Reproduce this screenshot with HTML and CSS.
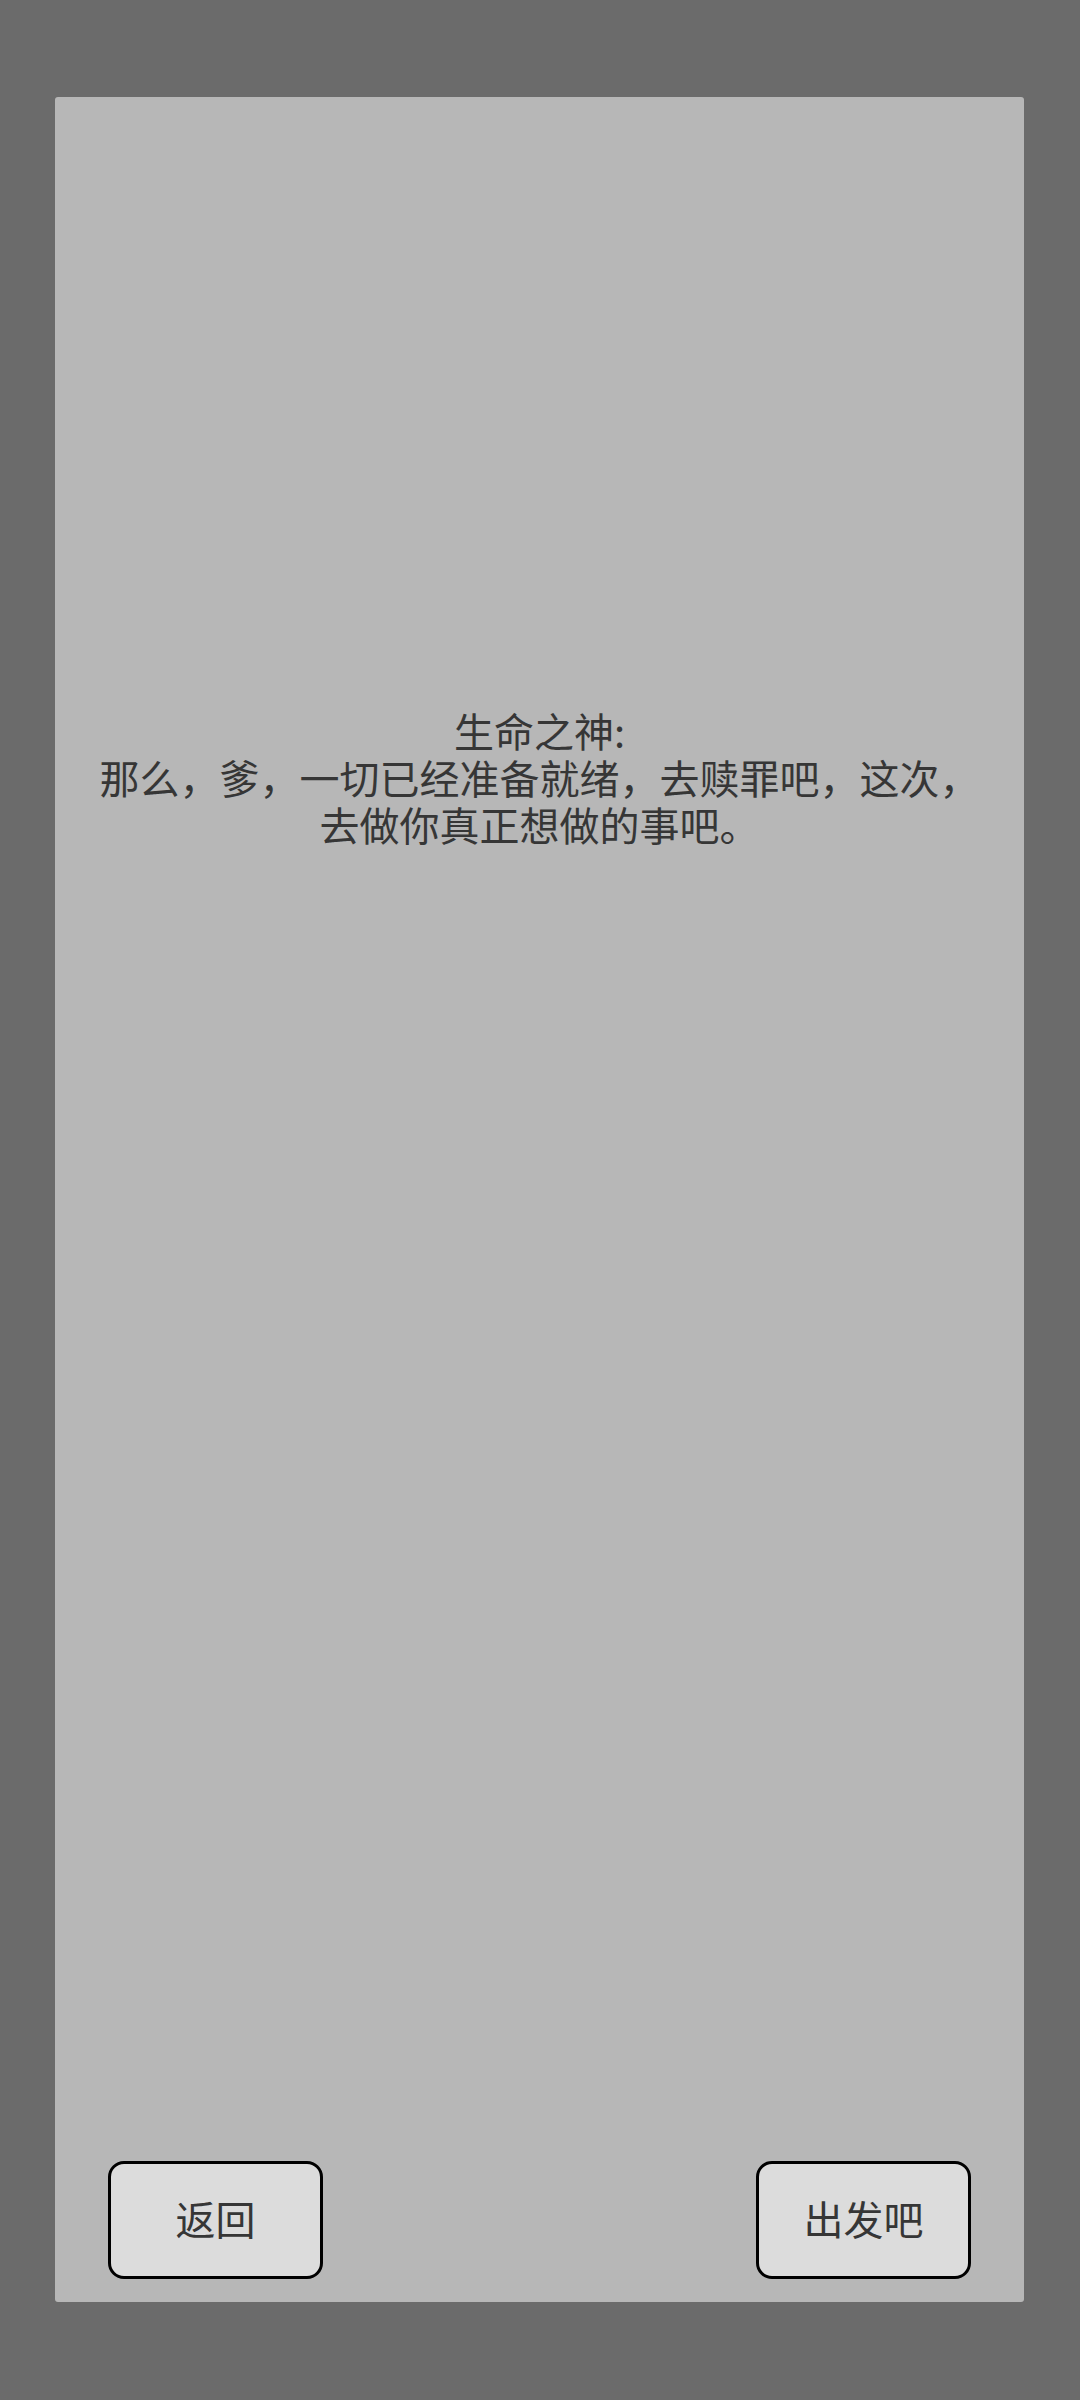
FILE: index.html
```html
<!DOCTYPE html>
<html lang="zh-CN">
<head>
<meta charset="utf-8">
<title>生命之神</title>
<link rel="stylesheet" href="styles.css">
</head>
<body>
<div class="screen">
  <div class="panel">
    <div class="dialog">
      <div class="line">生命之神:</div>
      <div class="line">那么，爹，一切已经准备就绪，去赎罪吧，这次，</div>
      <div class="line">去做你真正想做的事吧。</div>
    </div>
    <div class="actions">
      <button class="btn">返回</button>
      <button class="btn">出发吧</button>
    </div>
  </div>
</div>
</body>
</html>
```

FILE: styles.css
```css
html, body {
  margin: 0;
  padding: 0;
  background: #6b6b6b;
}
.screen {
  width: 1080px;
  height: 2400px;
  box-sizing: border-box;
  padding: 97px 56px 0 55px;
  font-family: "Noto Sans CJK SC", "Noto Sans", sans-serif;
}
.panel {
  width: 969px;
  height: 2205px;
  background: #b7b7b7;
  border-radius: 3px;
  display: flex;
  flex-direction: column;
  box-sizing: border-box;
  padding: 0 53px 23px 53px;
}
.dialog {
  margin-top: 610px;
  margin-left: -53px;
  margin-right: -53px;
  text-align: center;
  color: #363636;
  font-size: 40px;
  line-height: 47px;
}
.actions {
  margin-top: auto;
  display: flex;
  justify-content: space-between;
}
.btn {
  width: 215px;
  height: 118px;
  box-sizing: border-box;
  background: #dcdcdc;
  border: 3px solid #000;
  border-radius: 16px;
  font-family: "Noto Sans CJK SC", "Noto Sans", sans-serif;
  font-size: 40px;
  color: #363636;
  padding: 0 0 4px 0;
  display: flex;
  align-items: center;
  justify-content: center;
}
```
